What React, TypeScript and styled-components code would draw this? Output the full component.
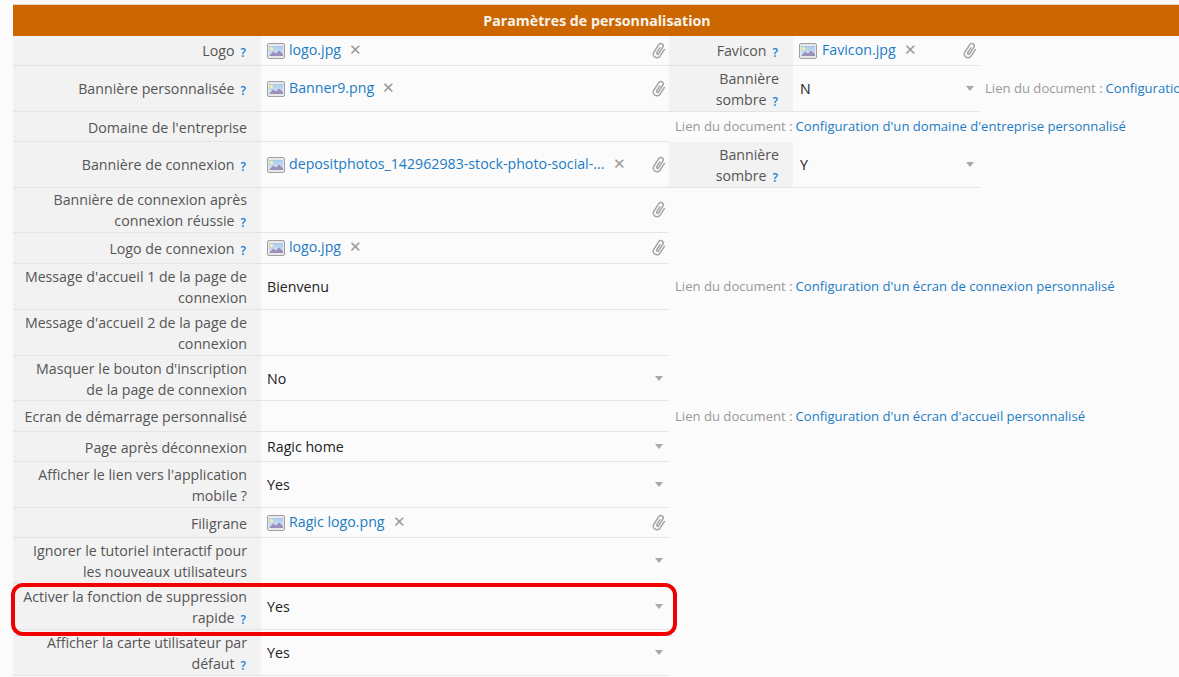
import { ReactNode } from "react";
import styled, { createGlobalStyle } from "styled-components";

const GlobalStyle = createGlobalStyle`
  html, body {
    margin: 0;
    height: 100%;
    overflow: hidden;
    background: #fbfbfb;
    font-family: "Open Sans", "Liberation Sans", sans-serif;
    font-size: 14.2px;
    color: #222;
  }
`;

const Page = styled.div`
  position: relative;
  width: 1179px;
  height: 677px;
  padding: 4px 0 0 13px;
  box-sizing: border-box;
  overflow: hidden;
`;

const Title = styled.div`
  width: 1200px;
  height: 32px;
  box-sizing: border-box;
  border-top: 1px solid #e8d8c8;
  background: #cc6600;
  color: #f8f3ec;
  font-size: 14.2px;
  font-weight: 700;
  line-height: 31px;
  text-align: center;
  padding-right: 32px;
`;

const Sheet = styled.div`
  display: grid;
  grid-template-columns: 248px 408px 124px 187px 240px;
  grid-template-rows: 30px 46px 30px 46px 45px 31px 46px 46px 45px 31px 30px 46px 30px 46px 46px 46px;
  width: 1207px;
`;

const Label = styled.div<{ $col?: number }>`
  grid-column: ${(p) => p.$col ?? 1};
  background: #f2f2f2;
  border-bottom: 1px solid #e4e4e4;
  color: #555;
  text-align: right;
  line-height: 21px;
  padding: 1px 14px 0 8px;
  display: flex;
  align-items: center;
  justify-content: flex-end;
  box-sizing: border-box;
`;

const LabelText = styled.span`
  display: block;
`;

const Help = styled.span`
  color: #1b7fd0;
  font-size: 12px;
  font-weight: 600;
  margin: 0 1px 0 6px;
  position: relative;
  top: 1px;
`;

const Value = styled.div<{ $col?: number; $inset?: boolean }>`
  grid-column: ${(p) => p.$col ?? 2};
  border-bottom: 1px solid #e4e4e4;
  display: flex;
  align-items: center;
  padding: 0 6px 0 ${(p) => (p.$inset ? 7 : 6)}px;
  box-sizing: border-box;
  color: #222;
  min-width: 0;
`;

const FileLink = styled.a<{ $col?: number; $wide?: boolean }>`
  color: #1b7cc4;
  margin-left: ${(p) => (p.$col === 4 ? 5 : 4)}px;
  min-width: ${(p) => (p.$wide ? "316px" : "0")};
  white-space: nowrap;
  position: relative;
  top: -1.5px;
`;

const Remove = styled.span`
  color: #999;
  font-size: 15px;
  margin-left: 8px;
  position: relative;
  top: -2px;
`;

const Clip = styled.svg`
  margin-left: auto;
  margin-right: -4px;
`;

const Caret = styled.span`
  margin-left: auto;
  width: 0;
  height: 0;
  border-left: 4px solid transparent;
  border-right: 4px solid transparent;
  border-top: 5px solid #a8a8a8;
`;

const Note = styled.div<{ $col: number; $span: number }>`
  grid-column: ${(p) => p.$col} / span ${(p) => p.$span};
  display: flex;
  align-items: center;
  padding: 0 0 2px ${(p) => (p.$col === 3 ? 6 : 5)}px;
  color: #999;
  font-size: 13.1px;
  white-space: nowrap;
  overflow: hidden;
`;

const DocLink = styled.a`
  color: #1b7cc4;
  margin-left: 3px;
`;

const Highlight = styled.div`
  position: absolute;
  left: 11px;
  top: 583px;
  width: 666px;
  height: 53px;
  box-sizing: border-box;
  border: 4px solid #f00000;
  border-radius: 12px;
  pointer-events: none;
`;

function PaperclipIcon() {
  return (
    <Clip width="16" height="18" viewBox="0 0 15 17" fill="none">
      <g transform="rotate(33 7.5 8.5)">
        <path
          d="M11 4.5 V12 a3.5 3.5 0 0 1 -7 0 V3.5 a2.3 2.3 0 0 1 4.6 0 V11 a1 1 0 0 1 -2 0 V5.5"
          stroke="#a3a3a3"
          strokeWidth="1.4"
          strokeLinecap="round"
        />
      </g>
    </Clip>
  );
}

function FileIcon() {
  return (
    <svg width="18" height="16" viewBox="0 0 18 16">
      <defs>
        <linearGradient id="sky" x1="0" y1="0" x2="0" y2="1">
          <stop offset="0" stopColor="#a9c8ec" />
          <stop offset="1" stopColor="#dbe8f6" />
        </linearGradient>
      </defs>
      <rect x="0.5" y="0.5" width="17" height="15" rx="1.5" fill="#e8e8e8" stroke="#a0a0a0" />
      <rect x="2" y="3" width="14" height="10" fill="url(#sky)" />
      <circle cx="4.5" cy="5.5" r="1.7" fill="#f5f09a" />
      <path d="M2 13 L6 8.5 L9 10.5 L12 7.5 L16 11 V13 Z" fill="#9a90ba" />
    </svg>
  );
}

function Name({ children, help }: { children: ReactNode; help?: boolean }) {
  return (
    <LabelText>
      {children}
      {help && <Help>?</Help>}
    </LabelText>
  );
}

function FileValue({ name, col, wide }: { name: string; col?: number; wide?: boolean }) {
  return (
    <Value $col={col}>
      <FileIcon />
      <FileLink $col={col} $wide={wide}>{name}</FileLink>
      <Remove>✕</Remove>
      <PaperclipIcon />
    </Value>
  );
}

function SelectValue({ text, col }: { text?: string; col?: number }) {
  return (
    <Value $col={col} $inset={col === 4}>
      {text}
      <Caret />
    </Value>
  );
}

function DocNote({ link, col, span }: { link: string; col: number; span: number }) {
  return (
    <Note $col={col} $span={span}>
      Lien du document :<DocLink>{link}</DocLink>
    </Note>
  );
}

export default function App() {
  return (
    <>
      <GlobalStyle />
      <Page>
        <Title>Paramètres de personnalisation</Title>
        <Sheet>
          <Label><Name help>Logo</Name></Label>
          <FileValue name="logo.jpg" />
          <Label $col={3}><Name help>Favicon</Name></Label>
          <FileValue name="Favicon.jpg" col={4} />

          <Label><Name help>Bannière personnalisée</Name></Label>
          <FileValue name="Banner9.png" />
          <Label $col={3}><Name help>Bannière sombre</Name></Label>
          <SelectValue text="N" col={4} />
          <DocNote link="Configuration d'un logo personnalisé" col={5} span={1} />

          <Label><Name>Domaine de l'entreprise</Name></Label>
          <Value />
          <DocNote link="Configuration d'un domaine d'entreprise personnalisé" col={3} span={3} />

          <Label><Name help>Bannière de connexion</Name></Label>
          <FileValue name="depositphotos_142962983-stock-photo-social-..." wide />
          <Label $col={3}><Name help>Bannière sombre</Name></Label>
          <SelectValue text="Y" col={4} />

          <Label><Name help>Bannière de connexion après connexion réussie</Name></Label>
          <Value><PaperclipIcon /></Value>

          <Label><Name help>Logo de connexion</Name></Label>
          <FileValue name="logo.jpg" />

          <Label><Name>Message d'accueil 1 de la page de connexion</Name></Label>
          <Value>Bienvenu</Value>
          <DocNote link="Configuration d'un écran de connexion personnalisé" col={3} span={3} />

          <Label><Name>Message d'accueil 2 de la page de connexion</Name></Label>
          <Value />

          <Label><Name>Masquer le bouton d'inscription de la page de connexion</Name></Label>
          <SelectValue text="No" />

          <Label><Name>Ecran de démarrage personnalisé</Name></Label>
          <Value />
          <DocNote link="Configuration d'un écran d'accueil personnalisé" col={3} span={3} />

          <Label><Name>Page après déconnexion</Name></Label>
          <SelectValue text="Ragic home" />

          <Label><Name>Afficher le lien vers l'application mobile ?</Name></Label>
          <SelectValue text="Yes" />

          <Label><Name>Filigrane</Name></Label>
          <FileValue name="Ragic logo.png" />

          <Label><Name>Ignorer le tutoriel interactif pour les nouveaux utilisateurs</Name></Label>
          <SelectValue />

          <Label><Name help>Activer la fonction de suppression rapide</Name></Label>
          <SelectValue text="Yes" />

          <Label><Name help>Afficher la carte utilisateur par défaut</Name></Label>
          <SelectValue text="Yes" />
        </Sheet>
        <Highlight />
      </Page>
    </>
  );
}
